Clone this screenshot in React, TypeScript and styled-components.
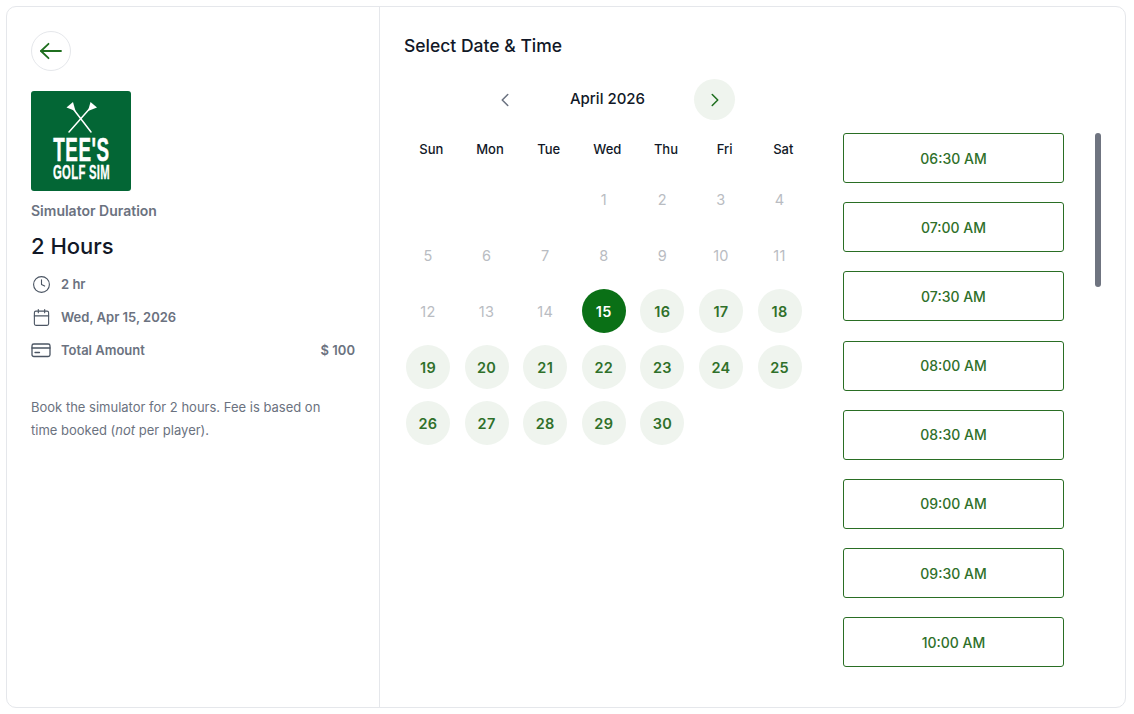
import styled, { createGlobalStyle } from 'styled-components';
import { Calendar as CalendarIcon, ChevronLeft, ChevronRight, Clock } from 'lucide-react';

const GlobalStyle = createGlobalStyle`
  html, body {
    margin: 0;
    padding: 0;
    background: #fff;
    font-family: Inter, "Liberation Sans", sans-serif;
  }
  * { box-sizing: border-box; }
`;

const Page = styled.div`
  width: 1134px;
  height: 714px;
  padding: 6px 8px 6px 6px;
  overflow: hidden;
`;

const Card = styled.div`
  display: flex;
  height: 702px;
  border: 1px solid #e5e7eb;
  border-radius: 10px;
`;

const Sidebar = styled.aside`
  width: 373px;
  flex: none;
  padding: 24px 24px 0;
  border-right: 1px solid #e5e7eb;
`;

const BackButton = styled.button`
  display: flex;
  align-items: center;
  justify-content: center;
  width: 40px;
  height: 40px;
  padding: 0;
  background: #fff;
  border: 1px solid #e5e7eb;
  border-radius: 50%;
  color: #1f6f1f;
`;

const LogoTile = styled.svg`
  display: block;
  width: 100px;
  height: 100px;
  margin-top: 20px;
  border-radius: 3px;
`;

const LogoText = styled.text`
  font-family: "Liberation Sans", sans-serif;
  font-weight: 700;
  fill: #fff;
  stroke: #fff;
  text-anchor: middle;
`;

const EventLabel = styled.div`
  margin-top: 11px;
  height: 17px;
  font-size: 14px;
  line-height: 17px;
  font-weight: 600;
  color: #6b7280;
`;

const EventTitle = styled.h1`
  margin: 12px 0 0;
  font-size: 22px;
  line-height: 30px;
  font-weight: 500;
  color: #111827;
`;

const MetaList = styled.div`
  display: flex;
  flex-direction: column;
  gap: 13px;
  margin-top: 13px;
`;

const MetaRow = styled.div`
  display: flex;
  align-items: center;
  height: 20px;
  font-size: 13px;
  font-weight: 600;
  color: #6b7280;
`;

const MetaIcon = styled.span`
  display: flex;
  justify-content: center;
  width: 20px;
  margin-right: 10px;
  color: #4b5563;
`;

const MetaPrice = styled.span`
  margin-left: auto;
`;

const Description = styled.p`
  margin: 36px 0 0;
  width: 310px;
  font-size: 13px;
  line-height: 23px;
  color: #6b7280;
`;

const Main = styled.main`
  flex: 1;
  min-width: 0;
  padding: 28px 0 0 24px;
`;

const Heading = styled.h2`
  margin: 0;
  font-size: 17.5px;
  line-height: 22px;
  font-weight: 500;
  color: #111827;
`;

const Columns = styled.div`
  display: flex;
  margin-top: 22px;
`;

const Calendar = styled.section`
  width: 439px;
  flex: none;
`;

const MonthBar = styled.div`
  display: flex;
  align-items: center;
  height: 41px;
  padding-left: 80px;
`;

const NavButton = styled.button<{ $active?: boolean }>`
  display: flex;
  align-items: center;
  justify-content: center;
  width: 41px;
  height: 41px;
  padding: 0;
  border: 0;
  border-radius: 50%;
  background: ${p => (p.$active ? '#eff4ee' : 'transparent')};
  color: ${p => (p.$active ? '#1f6f1f' : '#6b7280')};
`;

const MonthName = styled.div`
  width: 169px;
  padding: 0 4px 2px 0;
  text-align: center;
  font-size: 15px;
  font-weight: 500;
  color: #111827;
`;

const WeekHeader = styled.div`
  display: grid;
  grid-template-columns: repeat(7, 58.67px);
  margin: 19px 0 0 -2px;
`;

const WeekDay = styled.div`
  text-align: center;
  font-size: 13px;
  line-height: 20px;
  font-weight: 500;
  color: #111827;
`;

const DayGrid = styled.div`
  display: grid;
  grid-template-columns: repeat(7, 44px);
  grid-auto-rows: 44px;
  column-gap: 14.6px;
  row-gap: 12px;
  margin-top: 18px;
  padding-left: 2px;
`;

const Day = styled.div<{ $state: 'blank' | 'off' | 'open' | 'selected' }>`
  display: flex;
  align-items: center;
  justify-content: center;
  border-radius: 50%;
  font-size: 14.5px;
  letter-spacing: 0.3px;
  font-weight: ${p => (p.$state === 'off' ? 400 : 600)};
  color: ${p => (p.$state === 'off' ? '#b9bcc2' : p.$state === 'selected' ? '#fff' : '#2f702a')};
  background: ${p => (p.$state === 'open' ? '#eff4ee' : p.$state === 'selected' ? '#0a7016' : 'transparent')};
`;

const TimesPane = styled.section`
  position: relative;
  flex: 1;
  height: 545px;
  margin-top: 54px;
  overflow: hidden;
`;

const TimeList = styled.div`
  display: flex;
  flex-direction: column;
  gap: 19.2px;
  width: 221px;
`;

const TimeSlot = styled.button`
  flex: none;
  height: 50px;
  padding: 0;
  background: #fff;
  border: 1px solid #2a6e24;
  border-radius: 3px;
  font-family: inherit;
  font-size: 14px;
  font-weight: 500;
  color: #2f702a;
`;

const ScrollThumb = styled.div`
  position: absolute;
  top: 0;
  left: 252px;
  width: 6px;
  height: 154px;
  border-radius: 3px;
  background: #6f7480;
`;

const blanks = [0, 0, 0];
const offDays = Array.from({ length: 14 }, (_, i) => i + 1);
const openDays = Array.from({ length: 15 }, (_, i) => i + 16);
const weekDays = ['Sun', 'Mon', 'Tue', 'Wed', 'Thu', 'Fri', 'Sat'];
const times = ['06:30 AM', '07:00 AM', '07:30 AM', '08:00 AM', '08:30 AM', '09:00 AM', '09:30 AM', '10:00 AM'];

const Logo = () => (
  <LogoTile viewBox="0 0 100 100">
    <rect width="100" height="100" fill="#036635" />
    <g stroke="#fff" strokeLinecap="round" fill="none">
      <path d="M40 15 L60 41" strokeWidth="1.5" />
      <path d="M61 15 L38 41" strokeWidth="1.5" />
    </g>
    <g fill="#fff">
      <path d="M35.5 16.5 L42 11 L44.5 20 Z" />
      <path d="M66 16.5 L59.5 11 L57 20 Z" />
    </g>
    <LogoText transform="translate(50.5 69.5) scale(0.57 1)" fontSize="33" strokeWidth="0.5" letterSpacing="1">
      TEE'S
    </LogoText>
    <LogoText transform="translate(50.5 88) scale(0.58 1)" fontSize="19.5" strokeWidth="0.3" letterSpacing="0.5">
      GOLF SIM
    </LogoText>
  </LogoTile>
);

const BackArrow = () => (
  <svg width="24" height="24" viewBox="0 0 24 24" fill="none" stroke="currentColor" strokeWidth="1.8" strokeLinecap="round" strokeLinejoin="round">
    <path d="M2 12 H22" />
    <path d="M9.5 4.8 L2 12 L9.5 19.2" />
  </svg>
);

const CardIcon = () => (
  <svg width="20" height="20" viewBox="0 0 20 20" fill="none" stroke="currentColor" strokeWidth="1.3" strokeLinecap="round">
    <rect x="1" y="4" width="18" height="12.5" rx="1.8" />
    <path d="M1 8 H19" />
    <path d="M4 12.5 H8.5" />
  </svg>
);

export default function App() {
  return (
    <>
      <GlobalStyle />
      <Page>
        <Card>
          <Sidebar>
            <BackButton aria-label="Back">
              <BackArrow />
            </BackButton>
            <Logo />
            <EventLabel>Simulator Duration</EventLabel>
            <EventTitle>2 Hours</EventTitle>
            <MetaList>
              <MetaRow>
                <MetaIcon><Clock size={19} strokeWidth={1.4} /></MetaIcon>
                2 hr
              </MetaRow>
              <MetaRow>
                <MetaIcon><CalendarIcon size={19} strokeWidth={1.4} /></MetaIcon>
                Wed, Apr 15, 2026
              </MetaRow>
              <MetaRow>
                <MetaIcon><CardIcon /></MetaIcon>
                Total Amount
                <MetaPrice>$ 100</MetaPrice>
              </MetaRow>
            </MetaList>
            <Description>
              Book the simulator for 2 hours. Fee is based on time booked (<em>not</em> per player).
            </Description>
          </Sidebar>
          <Main>
            <Heading>Select Date &amp; Time</Heading>
            <Columns>
              <Calendar>
                <MonthBar>
                  <NavButton aria-label="Previous month"><ChevronLeft size={22} strokeWidth={1.7} /></NavButton>
                  <MonthName>April 2026</MonthName>
                  <NavButton $active aria-label="Next month"><ChevronRight size={22} strokeWidth={1.7} /></NavButton>
                </MonthBar>
                <WeekHeader>
                  {weekDays.map(d => <WeekDay key={d}>{d}</WeekDay>)}
                </WeekHeader>
                <DayGrid>
                  {blanks.map((_, i) => <Day key={`b${i}`} $state="blank" />)}
                  {offDays.map(d => <Day key={d} $state="off">{d}</Day>)}
                  <Day $state="selected">15</Day>
                  {openDays.map(d => <Day key={d} $state="open">{d}</Day>)}
                </DayGrid>
              </Calendar>
              <TimesPane>
                <TimeList>
                  {times.map(t => <TimeSlot key={t}>{t}</TimeSlot>)}
                </TimeList>
                <ScrollThumb />
              </TimesPane>
            </Columns>
          </Main>
        </Card>
      </Page>
    </>
  );
}
